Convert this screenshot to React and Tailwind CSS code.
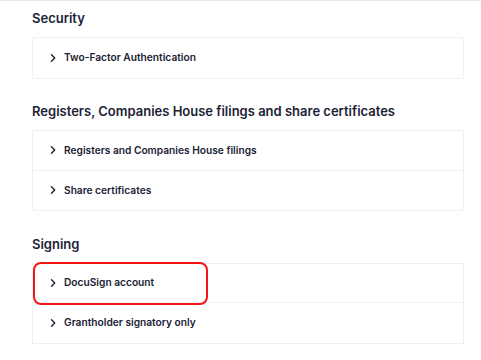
import React from "react";

function Chevron() {
  return (
    <svg width="8" height="8" viewBox="0 0 8 8" fill="none" className="shrink-0">
      <path d="M2.5 0.8 L5.7 4 L2.5 7.2" stroke="#1b2235" strokeWidth="1.4" strokeLinecap="round" strokeLinejoin="round" />
    </svg>
  );
}

function Row({ label, last, highlight }) {
  return (
    <div className={"relative h-[39.5px] flex items-center gap-[7px] pl-[16px] " + (last ? "" : "border-b border-[#edf0f4]")}>
      <Chevron />
      <span className="text-[10.2px] font-semibold text-[#1b2235]">{label}</span>
      {highlight && (
        <div className="absolute left-[0px] top-[-2px] w-[175px] h-[43px] rounded-[8px] border-[2.5px] border-[#f51515]" />
      )}
    </div>
  );
}

function Section({ title, rows, first }) {
  return (
    <div className={first ? "pt-[9px]" : "pt-[24.5px]"}>
      <h2 className="text-[13px] leading-[16px] font-semibold text-[#1b2235] mb-[11px]">{title}</h2>
      <div className="border border-[#edf0f4] bg-white">
        {rows.map((r, i) => (
          <Row key={r.label} label={r.label} highlight={r.highlight} last={i === rows.length - 1} />
        ))}
      </div>
    </div>
  );
}

export default function App() {
  return (
    <div className="w-[481px] h-[360px] overflow-hidden bg-white border-t border-[#e3e8ef]" style={{ fontFamily: "Inter, 'Noto Sans', sans-serif" }}>
      <div className="pl-[32px] pr-[17px]">
        <Section first title="Security" rows={[{ label: "Two-Factor Authentication" }]} />
        <Section
          title="Registers, Companies House filings and share certificates"
          rows={[{ label: "Registers and Companies House filings" }, { label: "Share certificates" }]}
        />
        <Section
          title="Signing"
          rows={[{ label: "DocuSign account", highlight: true }, { label: "Grantholder signatory only" }]}
        />
      </div>
    </div>
  );
}
